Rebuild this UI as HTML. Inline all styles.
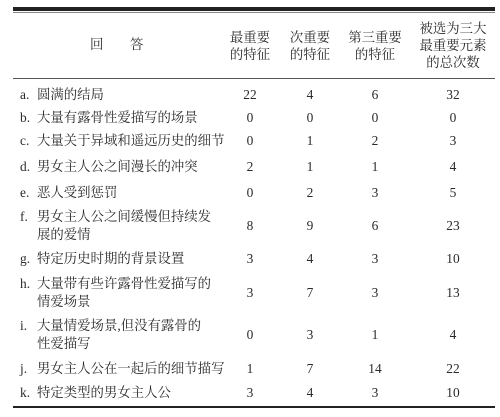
<!DOCTYPE html>
<html><head><meta charset="utf-8"><style>
body{margin:0;background:#fff;width:500px;height:417px;position:relative;overflow:hidden;font-family:"Liberation Serif","Noto Serif CJK SC",serif;color:#2a2a2a;font-size:13.4px}
.l{position:absolute;left:13px;width:482px;background:#222}
.t{position:absolute;line-height:18px;white-space:nowrap}
.n{position:absolute;line-height:18px;width:60px;text-align:center;font-size:13.4px}
.h{position:absolute;line-height:17px;text-align:center;width:80px;font-size:13.4px}
</style></head><body>
<div class="l" style="top:7px;height:4px"></div>
<div class="l" style="top:12px;height:1px;background:#888"></div>
<div class="l" style="top:78px;height:1px;background:#555"></div>
<div class="l" style="top:406px;height:2px"></div>
<div class="t" style="left:90px;top:36px;">回</div>
<div class="t" style="left:130px;top:36px;">答</div>
<div class="h" style="left:210px;top:29px">最重要<br>的特征</div>
<div class="h" style="left:270px;top:29px">次重要<br>的特征</div>
<div class="h" style="left:335px;top:29px">第三重要<br>的特征</div>
<div class="h" style="left:413px;top:20px">被选为三大<br>最重要元素<br>的总次数</div>
<div id="rows"></div>
<script>
var R=[["a.","圆满的结局",86,"22","4","6","32"],
["b.","大量有露骨性爱描写的场景",109,"0","0","0","0"],
["c.","大量关于异域和遥远历史的细节",132,"0","1","2","3"],
["d.","男女主人公之间漫长的冲突",158,"2","1","1","4"],
["e.","恶人受到惩罚",184,"0","2","3","5"],
["f.","男女主人公之间缓慢但持续发<br>展的爱情",208,"8","9","6","23"],
["g.","特定历史时期的背景设置",250,"3","4","3","10"],
["h.","大量带有些许露骨性爱描写的<br>情爱场景",275,"3","7","3","13"],
["i.","大量情爱场景,但没有露骨的<br>性爱描写",317,"0","3","1","4"],
["j.","男女主人公在一起后的细节描写",360,"1","7","14","22"],
["k.","特定类型的男女主人公",384,"3","4","3","10"]];
var h="",cx=[250,310,375,453];
R.forEach(function(r){var two=r[1].indexOf("<br>")>0;var ny=two?r[2]+9:r[2];
h+='<div class="t" style="left:20px;top:'+r[2]+'px">'+r[0]+'</div>';
h+='<div class="t" style="left:37px;top:'+r[2]+'px">'+r[1]+'</div>';
for(var i=0;i<4;i++)h+='<div class="n" style="left:'+(cx[i]-30)+'px;top:'+ny+'px">'+r[3+i]+'</div>';});
document.getElementById("rows").innerHTML=h;
</script>
</body></html>
